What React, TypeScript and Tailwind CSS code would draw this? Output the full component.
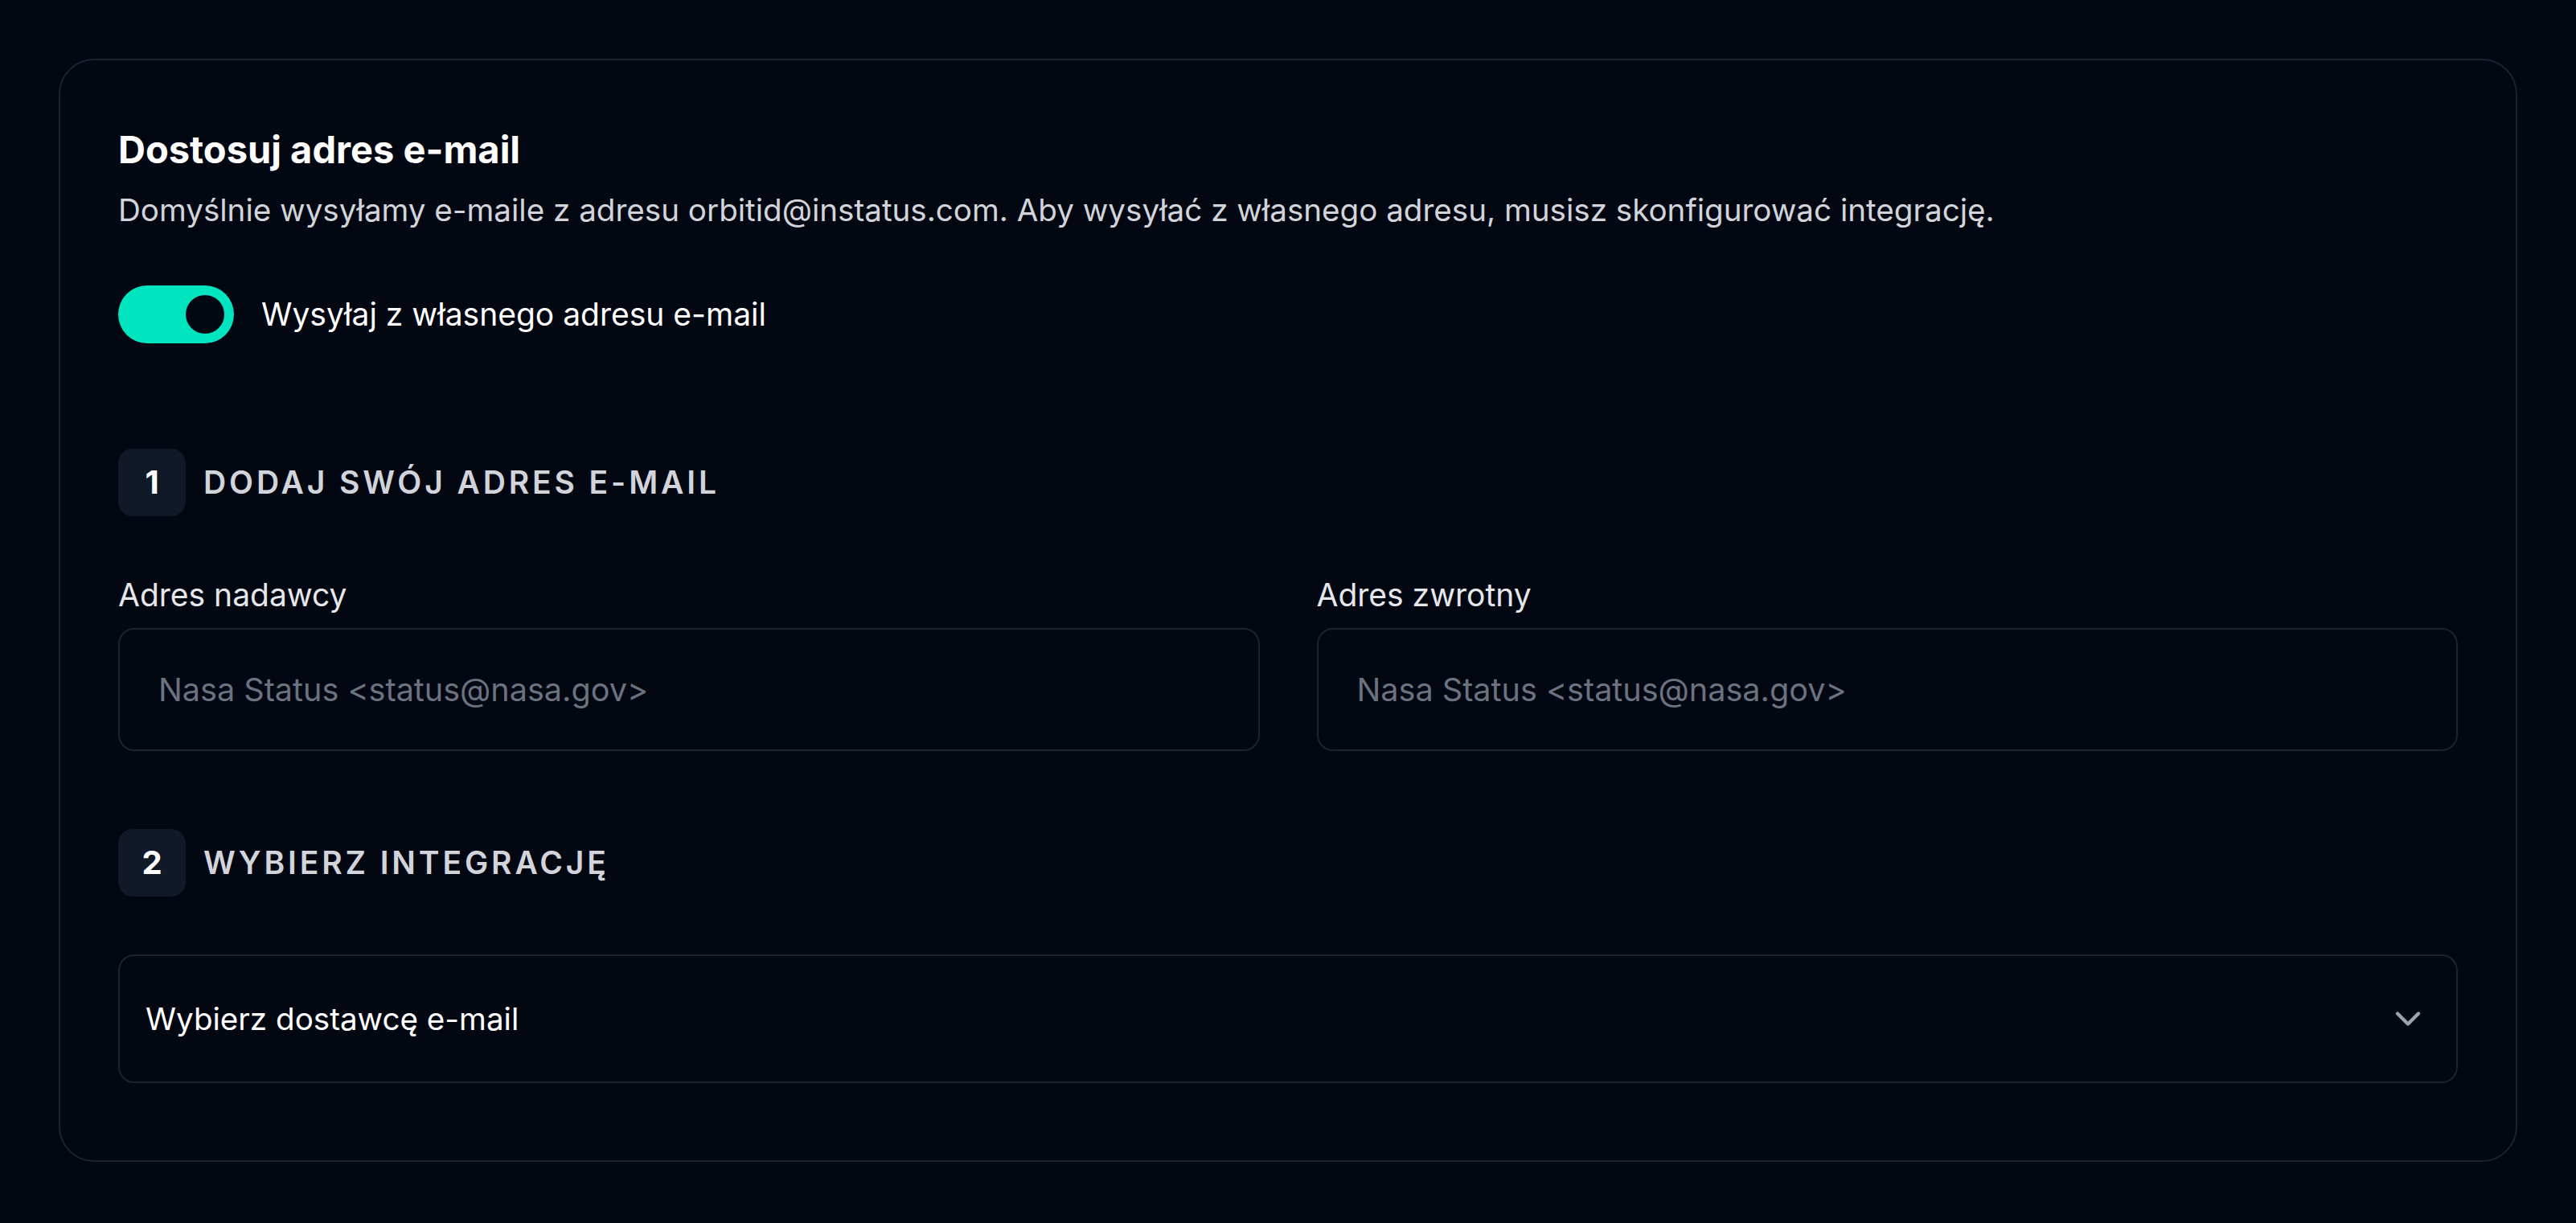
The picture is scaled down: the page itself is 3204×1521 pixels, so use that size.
import { ChevronDown } from "lucide-react"

const font = { fontFamily: "Inter, 'Noto Sans', sans-serif" }

function StepHeading({ step, title, className }: { step: string; title: string; className?: string }) {
  return (
    <div className={`flex items-center gap-[22px] ${className ?? ""}`}>
      <div className="flex h-[84px] w-[84px] items-center justify-center rounded-[18px] bg-[#111827] text-[40px] font-bold leading-none text-white">
        {step}
      </div>
      <h3 className="text-[39px] font-semibold uppercase leading-[56px] tracking-[0.1em] text-[#d1d5db]">
        {title}
      </h3>
    </div>
  )
}

function Field({ label, placeholder }: { label: string; placeholder: string }) {
  return (
    <label className="flex flex-col">
      <span className="mb-[13px] text-[39px] leading-[56px] text-[#e5e7eb]">{label}</span>
      <input
        type="text"
        placeholder={placeholder}
        className="h-[153px] w-full rounded-[20px] border-2 border-[#1c2230] bg-transparent pl-[48px] pr-[48px] text-[39.6px] text-white outline-none placeholder:text-[#6b7280]"
      />
    </label>
  )
}

export default function App() {
  return (
    <div style={font} className="min-h-screen bg-[#030712] px-[73px] py-[73px]">
      <section className="rounded-[44px] border-2 border-[#1c2230] bg-[#030712] px-[72px] pb-[96px] pt-[80px]">
        <h2 className="text-[47px] font-bold leading-[62px] text-white">Dostosuj adres e-mail</h2>
        <p className="mt-[16px] text-[38.6px] leading-[56px] text-[#d1d5db]">
          Domyślnie wysyłamy e-maile z adresu orbitid@instatus.com. Aby wysyłać z własnego adresu, musisz
          skonfigurować integrację.
        </p>

        <div className="mt-[66px] flex items-center gap-[34px]">
          <button
            role="switch"
            aria-checked="true"
            className="flex h-[72px] w-[144px] items-center justify-end rounded-full bg-[#00e5c0] p-[12px]"
          >
            <span className="h-[48px] w-[48px] rounded-full bg-[#030712]" />
          </button>
          <span className="text-[39px] leading-[56px] text-white">Wysyłaj z własnego adresu e-mail</span>
        </div>

        <StepHeading step="1" title="Dodaj swój adres e-mail" className="mt-[131px]" />

        <div className="mt-[70px] grid grid-cols-2 gap-[71px]">
          <Field label="Adres nadawcy" placeholder="Nasa Status <status@nasa.gov>" />
          <Field label="Adres zwrotny" placeholder="Nasa Status <status@nasa.gov>" />
        </div>

        <StepHeading step="2" title="Wybierz integrację" className="mt-[97px]" />

        <button className="mt-[72px] flex h-[160px] w-full items-center justify-between rounded-[20px] border-2 border-[#1c2230] pl-[32px] pr-[34px] text-left">
          <span className="text-[38.6px] leading-[56px] text-white">Wybierz dostawcę e-mail</span>
          <ChevronDown className="h-[52px] w-[52px] text-[#9ca3af]" strokeWidth={2} />
        </button>
      </section>
    </div>
  )
}
